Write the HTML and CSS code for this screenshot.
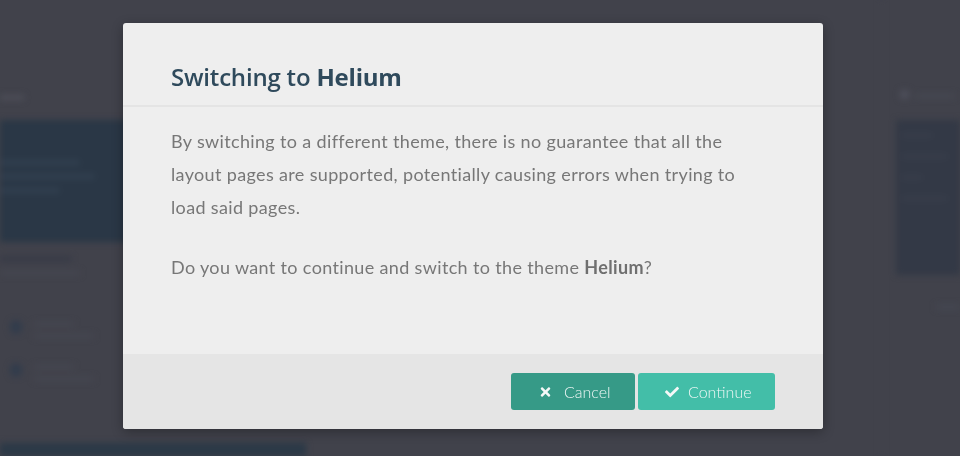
FILE: index.html
```html
<!DOCTYPE html>
<html lang="en">
<head>
<meta charset="utf-8">
<title>Switching theme</title>
<link rel="stylesheet" href="styles.css">
</head>
<body>
<div class="page" aria-hidden="true">
  <div class="col-left">
    <div class="crumb"><span class="crumb-bar"></span></div>
    <div class="hero">
      <div class="hero-line l1"></div>
      <div class="hero-line l2"></div>
      <div class="hero-line l3"></div>
    </div>
    <div class="info">
      <div class="info-title"></div>
      <div class="info-sub"></div>
    </div>
    <ul class="items">
      <li class="item"><span class="dot"></span><span class="lines"><span class="ln a"></span><span class="ln b"></span></span></li>
      <li class="item"><span class="dot"></span><span class="lines"><span class="ln a"></span><span class="ln b"></span></span></li>
    </ul>
    <div class="bottom-band"></div>
  </div>
  <div class="col-mid"></div>
  <div class="col-right">
    <div class="r-head"><span class="r-icon"></span><span class="r-text"></span></div>
    <div class="r-panel">
      <div class="rp-line w1"></div>
      <div class="rp-line w2"></div>
      <div class="rp-line w3"></div>
      <div class="rp-line w2"></div>
    </div>
    <div class="r-foot"><span class="rf-bar"></span></div>
  </div>
</div>

<div class="overlay">
  <div class="modal">
    <div class="modal-header">
      <h2 class="modal-title">Switching to <b>Helium</b></h2>
    </div>
    <div class="modal-body">
      <p>By switching to a different theme, there is no guarantee that all the layout pages are supported, potentially causing errors when trying to load said pages.</p>
      <p>Do you want to continue and switch to the theme <b>Helium</b>?</p>
    </div>
    <div class="modal-footer">
      <button class="btn btn-cancel" type="button">
        <svg class="ico ico-x" viewBox="0 0 352 512" aria-hidden="true"><path d="M242.72 256l100.07-100.07c12.28-12.28 12.28-32.19 0-44.48l-22.24-22.240c-12.28-12.28-32.19-12.28-44.48 0L176 189.28 75.93 89.21c-12.28-12.28-32.19-12.28-44.48 0L9.21 111.45c-12.28 12.28-12.28 32.19 0 44.48L109.28 256 9.21 356.07c-12.28 12.28-12.28 32.19 0 44.48l22.24 22.24c12.28 12.28 32.2 12.28 44.48 0L176 322.72l100.07 100.07c12.28 12.28 32.2 12.28 44.48 0l22.24-22.24c12.28-12.28 12.28-32.19 0-44.48L242.72 256z"/></svg>
        <span>Cancel</span>
      </button>
      <button class="btn btn-continue" type="button">
        <svg class="ico ico-check" viewBox="0 0 512 512" aria-hidden="true"><path d="M173.898 439.404l-166.4-166.4c-9.997-9.997-9.997-26.206 0-36.204l36.203-36.204c9.997-9.998 26.207-9.998 36.204 0L192 312.69 432.095 72.596c9.997-9.997 26.207-9.997 36.204 0l36.203 36.204c9.997 9.997 9.997 26.206 0 36.204l-294.4 294.401c-10.008 9.997-26.211 9.997-36.204-.001z"/></svg>
        <span>Continue</span>
      </button>
    </div>
  </div>
</div>
</body>
</html>
```

FILE: styles.css
```css
html, body {
  margin: 0;
  padding: 0;
  height: 100%;
}
body {
  background: #41424b;
  font-family: Lato, "Liberation Sans", sans-serif;
  overflow: hidden;
}

/* blurred page behind the modal */
.page {
  display: flex;
  height: 456px;
  filter: blur(3px);
}
.col-left {
  width: 306px;
  display: flex;
  flex-direction: column;
}
.crumb {
  height: 120px;
  box-sizing: border-box;
  padding-top: 95px;
}
.crumb-bar {
  display: block;
  width: 24px;
  height: 5px;
  background: #4d4e58;
}
.hero {
  height: 122px;
  background: #2a3746;
  padding: 40px 0 0 0;
  box-sizing: border-box;
}
.hero-line {
  height: 5px;
  background: #324050;
  margin-bottom: 9px;
  border-radius: 3px;
}
.hero-line.l1 { width: 80px; }
.hero-line.l2 { width: 95px; }
.hero-line.l3 { width: 60px; }
.info {
  padding: 14px 0 0 0;
  height: 58px;
  box-sizing: border-box;
}
.info-title {
  width: 72px;
  height: 6px;
  background: #383b47;
  border-radius: 3px;
}
.info-sub {
  margin-top: 9px;
  width: 80px;
  height: 4px;
  background: #464751;
}
.items {
  list-style: none;
  margin: 0;
  padding: 20px 0 0 10px;
  flex: 1;
}
.item {
  display: flex;
  gap: 12px;
  height: 43px;
}
.dot {
  width: 12px;
  height: 14px;
  border-radius: 6px;
  background: #323c4c;
}
.lines { display: flex; flex-direction: column; gap: 8px; padding-top: 2px; }
.ln { height: 4px; background: #464751; }
.ln.a { width: 40px; }
.ln.b { width: 60px; }
.bottom-band {
  height: 13px;
  background: #2b3947;
}
.col-mid {
  flex: 1;
  border-right: 1px solid #43454f;
  margin-right: 14px;
}
.col-right {
  width: 64px;
  display: flex;
  flex-direction: column;
}
.r-head {
  height: 120px;
  box-sizing: border-box;
  padding: 90px 0 0 4px;
  display: flex;
  gap: 6px;
}
.r-icon { width: 9px; height: 9px; background: #4d4f5a; border-radius: 2px; }
.r-text { width: 40px; height: 4px; margin-top: 4px; background: #474953; }
.r-panel {
  height: 155px;
  background: #333946;
  padding: 14px 6px;
  box-sizing: border-box;
}
.rp-line { height: 3px; background: #3b404d; margin-bottom: 18px; }
.rp-line.w1 { width: 30px; }
.rp-line.w2 { width: 45px; }
.rp-line.w3 { width: 20px; }
.r-foot { flex: 1; padding: 30px 0 0 40px; }
.rf-bar { display: block; width: 24px; height: 4px; background: #464853; }

/* modal */
.overlay {
  position: fixed;
  inset: 0;
}
.modal {
  position: absolute;
  left: 123px;
  top: 23px;
  width: 700px;
  height: 406px;
  background: #eeeeee;
  border-radius: 3px;
  overflow: hidden;
  display: flex;
  flex-direction: column;
  box-shadow: 0 3px 12px rgba(0,0,0,0.3);
}
.modal-header {
  height: 84px;
  box-sizing: border-box;
  border-bottom: 2px solid #e4e4e4;
  padding: 39px 48px 0 48px;
}
.modal-title {
  margin: 0;
  font-family: "Open Sans", "DejaVu Sans", sans-serif;
  font-weight: 600;
  font-size: 24px;
  line-height: 30px;
  color: #2f4a5c;
  letter-spacing: -0.2px;
}
.modal-title b { font-weight: 700; }
.modal-body {
  flex: 1;
  padding: 18px 62px 0 48px;
  color: #777777;
  font-size: 18px;
  line-height: 33px;
  letter-spacing: 0.35px;
}
.modal-body p { margin: 0 0 27px 0; }
.modal-body b { color: #6f6f6f; font-weight: 700; }
.modal-footer {
  height: 75px;
  box-sizing: border-box;
  background: #e5e5e5;
  display: flex;
  justify-content: flex-end;
  align-items: center;
  gap: 3px;
  padding: 0 48px;
}
.btn {
  display: flex;
  align-items: center;
  height: 37px;
  border: 0;
  border-radius: 3px;
  color: #eef7f5;
  font-family: Lato, "Liberation Sans", sans-serif;
  font-weight: 300;
  font-size: 16px;
  padding: 0;
  cursor: pointer;
}
.btn-cancel {
  width: 124px;
  background: #369a87;
  padding-left: 29px;
  gap: 13px;
}
.btn-continue {
  width: 137px;
  background: #43bea8;
  padding-left: 27px;
  gap: 9px;
}
.ico { fill: #f4f8f7; display: block; }
.ico-x { width: 11px; height: 14px; }
.ico-check { width: 14px; height: 14px; }
```
